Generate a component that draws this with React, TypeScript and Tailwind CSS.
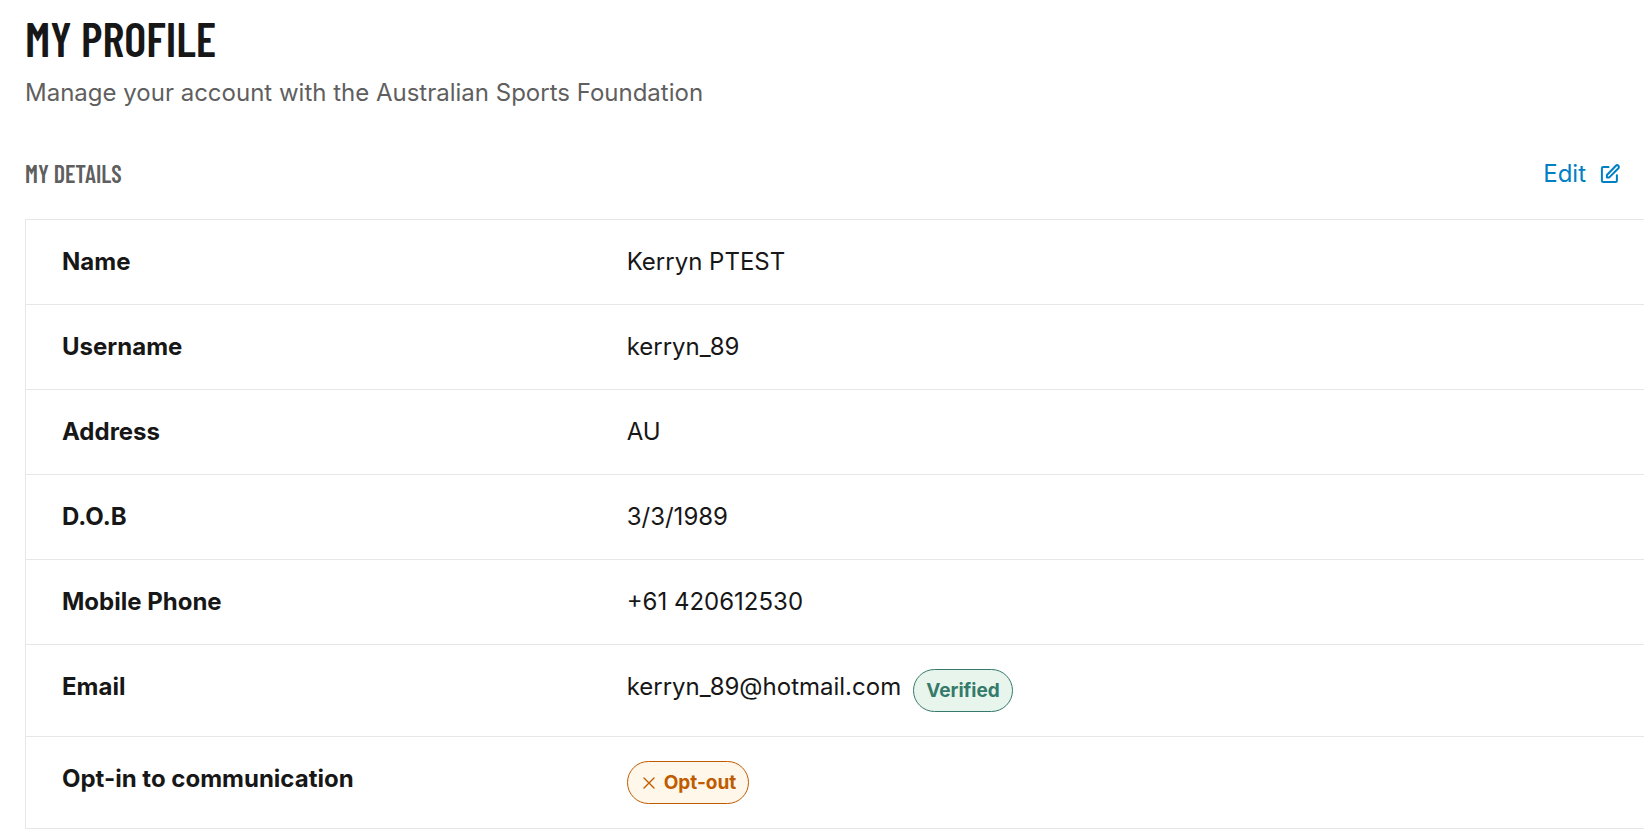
import type { ReactNode } from "react";

interface DetailRow {
  readonly label: string;
  readonly value: ReactNode;
}

function EditIcon() {
  return (
    <svg className="h-5 w-5" fill="none" stroke="currentColor" viewBox="0 0 20 20" aria-hidden="true">
      <g strokeLinecap="round" strokeLinejoin="round" strokeWidth={2}>
        <path d="M8.6 3H3.2A1.3 1.3 0 001.9 4.3v12.4A1.3 1.3 0 003.2 18h12.4a1.3 1.3 0 001.3-1.3v-5.4" />
        <path d="M6.9 11l9-9.2a1.7 1.7 0 012.5 2.4l-9.1 9.2H6.9z" />
      </g>
    </svg>
  );
}

function CrossIcon() {
  return (
    <svg className="h-3 w-3" fill="none" stroke="currentColor" viewBox="0 0 12 12" aria-hidden="true">
      <path strokeLinecap="round" strokeWidth={1.4} d="M1 1l10 10M11 1L1 11" />
    </svg>
  );
}

function VerifiedBadge() {
  return (
    <span className="inline-flex items-center rounded-full border border-[#357a6b] bg-[#e8f5ec] px-3 py-1.5 text-[19px] leading-[29px] font-bold text-[#357a6b]">
      Verified
    </span>
  );
}

function OptOutBadge() {
  return (
    <span className="inline-flex items-center gap-[9px] rounded-full border border-[#c05c00] bg-[#fff7ea] py-1.5 pr-3 pl-[15px] text-[19px] leading-[29px] font-bold text-[#c05c00]">
      <CrossIcon />
      Opt-out
    </span>
  );
}

const rows: readonly DetailRow[] = [
  { label: "Name", value: "Kerryn PTEST" },
  { label: "Username", value: "kerryn_89" },
  { label: "Address", value: "AU" },
  { label: "D.O.B", value: "3/3/1989" },
  { label: "Mobile Phone", value: "+61 420612530" },
  {
    label: "Email",
    value: (
      <div className="flex items-start gap-3">
        <span>kerryn_89@hotmail.com</span>
        <VerifiedBadge />
      </div>
    ),
  },
  {
    label: "Opt-in to communication",
    value: (
      <div className="flex">
        <OptOutBadge />
      </div>
    ),
  },
];

export default function App() {
  return (
    <main className="bg-white pt-3.5 pb-2 pl-[25px] font-['Inter',sans-serif] text-2xl leading-9 text-[#171717]">
      <header>
        <h1 className="font-['Barlow_Condensed','Liberation_Sans_Narrow',sans-serif] text-[47px] leading-[48px] font-semibold">
          MY PROFILE
        </h1>
        <p className="mt-[13px] text-[#5f5f5f]">
          Manage your account with the Australian Sports Foundation
        </p>
      </header>

      <section className="mt-[45px]">
        <div className="flex items-center justify-between pr-6">
          <h2 className="font-['Barlow_Condensed','Liberation_Sans_Narrow',sans-serif] font-semibold text-[#5f5f5f]">
            MY DETAILS
          </h2>
          <a href="#edit" className="flex items-center gap-3.5 text-[#0080c4]">
            Edit
            <EditIcon />
          </a>
        </div>

        <table className="mt-[27px] w-full border-separate border-spacing-0 border-t border-l border-[#e8e6e6]">
          <tbody>
            {rows.map((row) => (
              <tr key={row.label}>
                <th
                  scope="row"
                  className="w-[34.9%] border-b border-[#e8e6e6] px-9 py-6 text-left align-top font-bold"
                >
                  {row.label}
                </th>
                <td className="border-b border-[#e8e6e6] px-9 py-6 align-top">{row.value}</td>
              </tr>
            ))}
          </tbody>
        </table>
      </section>
    </main>
  );
}
